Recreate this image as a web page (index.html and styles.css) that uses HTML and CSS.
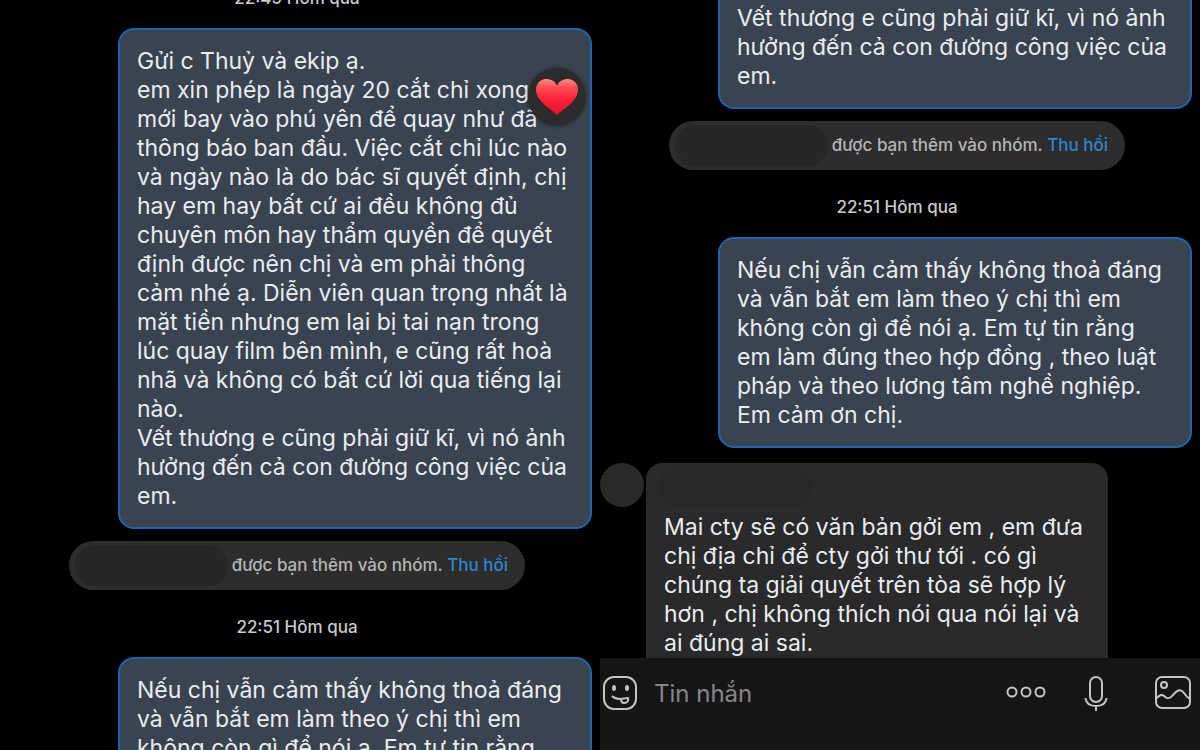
FILE: index.html
```
<!DOCTYPE html>
<html lang="vi">
<head>
  <meta charset="UTF-8">
  <meta name="viewport" content="width=device-width, initial-scale=1.0">
  <title>Tin nhắn</title>
  <link rel="stylesheet" href="styles.css">
</head>
<body>
  <!-- Left chat -->
  <section class="pane">
    <div class="thread thread-scrolled">
      <time class="timestamp">22:49 Hôm qua</time>

      <div class="bubble sent">
        Gửi c Thuỷ và ekip ạ.<br>
        em xin phép là ngày 20 cắt chỉ xong<br>
        mới bay vào phú yên để quay như đã<br>
        thông báo ban đầu. Việc cắt chỉ lúc nào<br>
        và ngày nào là do bác sĩ quyết định, chị<br>
        hay em hay bất cứ ai đều không đủ<br>
        chuyên môn hay thẩm quyền để quyết<br>
        định được nên chị và em phải thông<br>
        cảm nhé ạ. Diễn viên quan trọng nhất là<br>
        mặt tiền nhưng em lại bị tai nạn trong<br>
        lúc quay film bên mình, e cũng rất hoà<br>
        nhã và không có bất cứ lời qua tiếng lại<br>
        nào.<br>
        Vết thương e cũng phải giữ kĩ, vì nó ảnh<br>
        hưởng đến cả con đường công việc của<br>
        em.
        <span class="reaction">
          <svg width="44" height="40" viewBox="0 0 44 40">
            <defs>
              <linearGradient id="heart" x1="0" y1="0" x2="0" y2="1">
                <stop offset="0" stop-color="#ff8a84"/>
                <stop offset="0.25" stop-color="#ff4a50"/>
                <stop offset="0.6" stop-color="#fb1f38"/>
                <stop offset="1" stop-color="#f01030"/>
              </linearGradient>
            </defs>
            <path fill="url(#heart)" d="M22 38C19 34 1 25 1 13C1 7 5 2 11 2C16 2 20 4 22 9C24 4 28 2 33 2C39 2 43 7 43 13C43 25 25 34 22 38Z"/>
          </svg>
        </span>
      </div>

      <div class="notice">
        <span class="hidden-name"></span>
        <span>được bạn thêm vào nhóm. <a href="#">Thu hồi</a></span>
      </div>

      <time class="timestamp">22:51 Hôm qua</time>

      <div class="bubble sent">
        Nếu chị vẫn cảm thấy không thoả đáng<br>
        và vẫn bắt em làm theo ý chị thì em<br>
        không còn gì để nói ạ. Em tự tin rằng
      </div>
    </div>
  </section>

  <!-- Right chat -->
  <section class="pane">
    <div class="thread thread-bottom">
      <div class="bubble sent continued">
        Vết thương e cũng phải giữ kĩ, vì nó ảnh<br>
        hưởng đến cả con đường công việc của<br>
        em.
      </div>

      <div class="notice">
        <span class="hidden-name"></span>
        <span>được bạn thêm vào nhóm. <a href="#">Thu hồi</a></span>
      </div>

      <time class="timestamp">22:51 Hôm qua</time>

      <div class="bubble sent">
        Nếu chị vẫn cảm thấy không thoả đáng<br>
        và vẫn bắt em làm theo ý chị thì em<br>
        không còn gì để nói ạ. Em tự tin rằng<br>
        em làm đúng theo hợp đồng , theo luật<br>
        pháp và theo lương tâm nghề nghiệp.<br>
        Em cảm ơn chị.
      </div>

      <div class="incoming">
        <div class="avatar"></div>
        <div class="bubble received">
          <div class="hidden-name"></div>
          Mai cty sẽ có văn bản gởi em , em đưa<br>
          chị địa chỉ để cty gởi thư tới . có gì<br>
          chúng ta giải quyết trên tòa sẽ hợp lý<br>
          hơn , chị không thích nói qua nói lại và<br>
          ai đúng ai sai.
        </div>
      </div>
    </div>

    <form class="composer">
      <button type="button" aria-label="Sticker">
        <svg width="36" height="36" viewBox="0 0 36 36">
          <rect x="2" y="2" width="32" height="32" rx="10"/>
          <path d="M10 21C12 23 15 24 18 24L26 23C27 26 25 28 22 28C20 28 19 26 19 24"/>
          <ellipse class="fill" cx="12" cy="13" rx="2" ry="3"/>
          <ellipse class="fill" cx="25" cy="13" rx="2" ry="3"/>
        </svg>
      </button>
      <input type="text" placeholder="Tin nhắn" aria-label="Tin nhắn">
      <button type="button" aria-label="Thêm">
        <svg width="40" height="36" viewBox="0 0 40 36">
          <circle cx="6" cy="17" r="4.5"/>
          <circle cx="20" cy="17" r="4.5"/>
          <circle cx="34" cy="17" r="4.5"/>
        </svg>
      </button>
      <button type="button" aria-label="Ghi âm">
        <svg width="24" height="36" viewBox="0 0 24 36">
          <rect x="6" y="2" width="12" height="25" rx="6"/>
          <path d="M1.500 23C2 28 6 31 12 31S22 28 22.500 23M12 31V36"/>
        </svg>
      </button>
      <button type="button" class="photo-btn" aria-label="Ảnh">
        <svg width="38" height="36" viewBox="0 0 38 36">
          <rect x="2" y="2" width="34" height="31" rx="6"/>
          <circle cx="10" cy="10" r="3"/>
          <path d="M2 24C5 20 8 19 10 21C13 24 16 24 19 20C24 14 27 14 30 18C32 21 34 23 36 24"/>
        </svg>
      </button>
    </form>
  </section>
</body>
</html>
```
FILE: styles.css
```
* {
  box-sizing: border-box;
}

body {
  margin: 0;
  height: 100vh;
  display: flex;
  overflow: hidden;
  background: #000;
  color: #e9edf1;
  font-family: Inter, "Liberation Sans", sans-serif;
  font-size: 23px;
  line-height: 29px;
}

.pane {
  flex: 1;
  min-width: 0;
  display: flex;
  flex-direction: column;
  overflow: hidden;
}

/* Messages */
.thread {
  flex: 1;
  min-height: 0;
  display: flex;
  flex-direction: column;
}

.thread > * {
  flex-shrink: 0;
}

.thread-scrolled {
  margin-top: -12px;
}

.thread-bottom {
  justify-content: flex-end;
}

.timestamp {
  align-self: center;
  margin: 0 6px 20px 0;
  color: #c9c9c9;
  font-size: 17px;
  font-weight: 500;
  line-height: 20px;
}

.bubble {
  position: relative;
  padding: 17px 17px 16px;
  border-radius: 16px;
  white-space: nowrap;
}

.sent {
  align-self: flex-end;
  width: 79%;
  margin-right: 8px;
  border: 2px solid #1d65b0;
  background: #3a4350;
}

.continued {
  border-top: 0;
  border-radius: 0 0 16px 16px;
}

.reaction {
  position: absolute;
  top: 38px;
  right: 4px;
  width: 58px;
  height: 58px;
  display: flex;
  align-items: center;
  justify-content: center;
  border-radius: 50%;
  background: #2c2c2d;
  box-shadow: 0 0 4px rgba(0, 0, 0, 0.4);
}

.notice {
  align-self: center;
  width: 76%;
  height: 49px;
  margin: 12px 6px 27px 0;
  padding: 0 17px 0 6px;
  display: flex;
  align-items: center;
  justify-content: space-between;
  border-radius: 25px;
  background: #2d2d2e;
  color: #b5b5b5;
  font-size: 17px;
  font-weight: 500;
  white-space: nowrap;
}

.notice a {
  color: #2b87d3;
  text-decoration: none;
}

.hidden-name {
  width: 153px;
  height: 41px;
  border-radius: 20px;
  background: #272727;
}

.incoming {
  display: flex;
  gap: 2px;
  margin-top: 15px;
}

.avatar {
  width: 44px;
  height: 44px;
  border-radius: 50%;
  background: #2a2a2a;
}

.received {
  width: 77%;
  padding: 3px 18px 0;
  border-radius: 16px 16px 0 0;
  background: #2a2a2a;
}

.received .hidden-name {
  margin: 0 0 6px -5px;
  background: #282828;
}

/* Message box */
.composer {
  display: flex;
  align-items: center;
  gap: 38px;
  padding: 17px 8px 39px 2px;
  background: #161616;
}

.composer input {
  flex: 1;
  min-width: 0;
  height: 36px;
  margin-left: -22px;
  padding: 0;
  border: none;
  outline: none;
  background: none;
  color: #e9edf1;
  font-family: inherit;
  font-size: 24px;
}

.composer input::placeholder {
  color: #85868a;
}

.composer button {
  display: flex;
  padding: 0;
  border: none;
  background: none;
  cursor: pointer;
}

.composer svg {
  fill: none;
  stroke: #c4c4c4;
  stroke-width: 2;
}

.composer .fill {
  fill: #c4c4c4;
  stroke: none;
}

.composer .photo-btn {
  margin-left: 8px;
}
```
